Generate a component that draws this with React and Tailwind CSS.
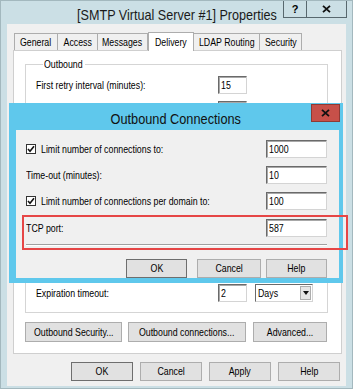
import React from "react";

const F = "font-['Liberation_Sans',Arial,sans-serif]";

function T({ children, center }) {
  return (
    <span
      className={`inline-block whitespace-nowrap scale-x-[0.8] ${
        center ? "origin-center" : "origin-left"
      }`}
    >
      {children}
    </span>
  );
}

function Btn({ children, w, def, className = "" }) {
  return (
    <div
      className={`flex items-center justify-center bg-[#e1e1e1] border ${
        def ? "border-[#6e6e6e]" : "border-[#adadad]"
      } text-[11px] text-black ${w} ${className}`}
    >
      <T center>{children}</T>
    </div>
  );
}

function Input({ value, w, h = "h-[18px]" }) {
  return (
    <div
      className={`${w} ${h} bg-white border border-[#d4d4d4] border-t-[#6a6a6a] border-l-[#6a6a6a] shadow-[inset_1px_1px_0_#a8a8a8] flex items-center pl-[2px] text-[11px] leading-none text-black`}
    >
      {value ? <T>{value}</T> : null}
    </div>
  );
}

function Check() {
  return (
    <div className="w-[10px] h-[10px] shrink-0 bg-white border border-[#333] flex items-center justify-center">
      <svg width="8" height="8" viewBox="0 0 8 8">
        <path d="M1 4 L3 6.2 L7 1.2" stroke="#111" strokeWidth="1.6" fill="none" />
      </svg>
    </div>
  );
}

function Tab({ label, w, active }) {
  return (
    <div
      className={`${w} flex items-center justify-center text-[11px] border border-b-0 border-[#adadad] ${
        active
          ? "h-[19px] bg-white relative z-10 -mb-px"
          : "h-[17px] bg-[#f0f0f0] -ml-px first:ml-0"
      }`}
    >
      <T center>{label}</T>
    </div>
  );
}

function Row({ label, value }) {
  return (
    <div className="flex items-center h-[18px]">
      <div className="w-[182px] text-[11px]">{label ? <T>{label}</T> : null}</div>
      <Input value={value} w="w-[29px]" />
    </div>
  );
}

export default function App() {
  return (
    <div
      className={`${F} relative w-[353px] h-[389px] overflow-hidden bg-[#cbdfe5] border border-[#a3b8be] flex flex-col text-black`}
    >
      {/* outer title bar */}
      <div className="h-[23px] grid grid-cols-[1fr_auto_1fr] shrink-0">
        <div />
        <div className="text-[15px] leading-none pt-[6px] text-[#1a1a1a] w-[196px] flex justify-center">
          <span className="inline-block whitespace-nowrap scale-x-[0.84] origin-center">
            [SMTP Virtual Server #1] Properties
          </span>
        </div>
        <div className="flex justify-end items-start pr-[5px]">
          <div className="w-[24px] h-[17px] border border-t-0 border-[#58686e] flex items-center justify-center text-[11px] font-bold">
            ?
          </div>
          <div className="w-[40px] h-[17px] border border-t-0 border-l-0 border-[#58686e] flex items-center justify-center">
            <svg width="9" height="8" viewBox="0 0 9 8">
              <path d="M1 0.8 L8 7.2 M8 0.8 L1 7.2" stroke="#111" strokeWidth="1.8" />
            </svg>
          </div>
        </div>
      </div>

      {/* client area */}
      <div className="mx-[6px] mb-[2px] flex-1 bg-[#f0f0f0] flex flex-col pt-[8px] pl-[6px] pr-[4px]">
        <div className="flex items-end h-[18px] pl-[1px]">
          <Tab label="General" w="w-[44px]" />
          <Tab label="Access" w="w-[41px]" />
          <Tab label="Messages" w="w-[51px]" />
          <Tab label="Delivery" w="w-[46px]" active />
          <Tab label="LDAP Routing" w="w-[67px]" />
          <Tab label="Security" w="w-[43px]" />
        </div>
        <div className="w-[329px] h-[304px] bg-white border border-[#cfcfcf] px-[11px] flex flex-col">
          <fieldset className="mt-[7px] w-[303px] border border-[#d5d5d5] pl-[10px] pb-[10px]">
            <legend className="ml-[7px] w-[42px] pl-[1px] text-[11px] leading-[13px] whitespace-nowrap">
              <T>Outbound</T>
            </legend>
            <div className="flex flex-col pt-[5px]">
              <Row label="First retry interval (minutes):" value="15" />
              <div className="mt-[7px]">
                <Row />
              </div>
              <div className="mt-[7px]">
                <Row />
              </div>
              <div className="mt-[7px]">
                <Row />
              </div>
              <div className="mt-[115px] flex items-center h-[18px]">
                <div className="w-[182px] text-[11px]">
                  <T>Expiration timeout:</T>
                </div>
                <Input value="2" w="w-[29px]" />
                <div className="ml-[8px] w-[58px] h-[18px] bg-white border border-[#d4d4d4] border-t-[#6a6a6a] border-l-[#6a6a6a] flex items-center justify-between pl-[2px] text-[11px]">
                  <T>Days</T>
                  <div className="w-[11px] h-[14px] mr-px bg-[#e6e6e6] border border-[#adadad] flex items-center justify-center">
                    <svg width="6" height="4" viewBox="0 0 6 4">
                      <path d="M0 0 H6 L3 4 Z" fill="#111" />
                    </svg>
                  </div>
                </div>
              </div>
            </div>
          </fieldset>
          <div className="mt-[9px] flex h-[20px]">
            <Btn w="w-[97px] h-[20px]">Outbound Security...</Btn>
            <Btn w="w-[118px] h-[20px]" className="ml-[6px]">
              Outbound connections...
            </Btn>
            <Btn w="w-[74px] h-[20px]" className="ml-[7px]">
              Advanced...
            </Btn>
          </div>
        </div>
        <div className="mt-[8px] flex justify-end gap-[7px] pr-[2px]">
          <Btn w="w-[62px] h-[19px]" def>OK</Btn>
          <Btn w="w-[62px] h-[19px]">Cancel</Btn>
          <Btn w="w-[62px] h-[19px]">Apply</Btn>
          <Btn w="w-[62px] h-[19px]">Help</Btn>
        </div>
      </div>

      {/* overlaid modal dialog */}
      <div className="absolute left-[8px] top-[102px] w-[334px] h-[180px] bg-[#5fc8ec] flex flex-col">
        <div className="h-[27px] grid grid-cols-[1fr_auto_1fr] shrink-0">
          <div />
          <div className="text-[15px] leading-none pt-[8px] text-[#111] w-[130px] flex justify-center">
            <span className="inline-block whitespace-nowrap scale-x-[0.85] origin-center">
              Outbound Connections
            </span>
          </div>
          <div className="flex justify-end items-start pr-[3px] pt-[1px]">
            <div className="w-[29px] h-[18px] bg-[#c75049] border border-[#8e3a35] flex items-center justify-center">
              <svg width="9" height="8" viewBox="0 0 9 8">
                <path d="M1 0.8 L8 7.2 M8 0.8 L1 7.2" stroke="#111" strokeWidth="1.8" />
              </svg>
            </div>
          </div>
        </div>
        <div className="ml-[7px] mr-[4px] h-[148px] bg-[#f0f0f0] pl-[10px] pr-[12px] pt-[10px] flex flex-col">
          <div className="flex items-center justify-between h-[18px]">
            <div className="flex items-center gap-[5px] text-[11px]">
              <Check />
              <T>Limit number of connections to:</T>
            </div>
            <Input value="1000" w="w-[61px]" />
          </div>
          <div className="mt-[8px] flex items-center justify-between h-[18px]">
            <span className="text-[11px]">
              <T>Time-out (minutes):</T>
            </span>
            <Input value="10" w="w-[61px]" />
          </div>
          <div className="mt-[8px] flex items-center justify-between h-[18px]">
            <div className="flex items-center gap-[5px] text-[11px]">
              <Check />
              <T>Limit number of connections per domain to:</T>
            </div>
            <Input value="100" w="w-[61px]" />
          </div>
          <div className="mt-[9px] flex items-center justify-between h-[18px]">
            <span className="text-[11px]">
              <T>TCP port:</T>
            </span>
            <Input value="587" w="w-[61px]" />
          </div>
          <div className="mt-[7px] h-[2px] border-t border-[#a0a0a0] border-b border-b-white" />
          <div className="mt-[13px] flex justify-end h-[19px]">
            <Btn w="w-[61px] h-[19px]" def className="mr-[10px]">OK</Btn>
            <Btn w="w-[64px] h-[19px]" className="mr-[5px]">Cancel</Btn>
            <Btn w="w-[61px] h-[19px]">Help</Btn>
          </div>
        </div>
      </div>

      {/* red highlight */}
      <div className="absolute left-[21px] top-[214px] w-[326px] h-[35px] border-2 border-[#e64646]" />
    </div>
  );
}
